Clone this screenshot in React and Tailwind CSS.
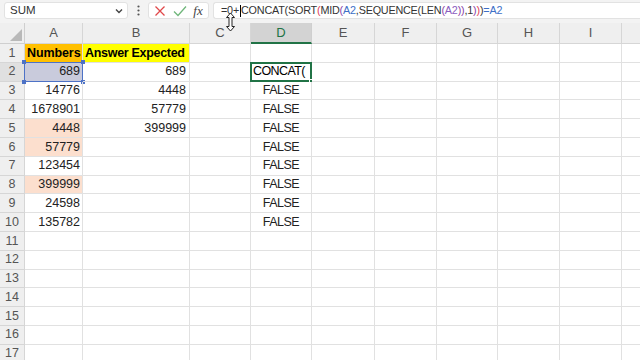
import React from "react";

const cols = [
  { k: "A", w: "w-[58px]" },
  { k: "B", w: "w-[107px]" },
  { k: "C", w: "w-[61px]" },
  { k: "D", w: "w-[61px]" },
  { k: "E", w: "w-[63px]" },
  { k: "F", w: "w-[62px]" },
  { k: "G", w: "w-[61px]" },
  { k: "H", w: "w-[62px]" },
  { k: "I", w: "w-[62px]" },
  { k: "J", w: "w-[62px]" },
];

const A = { 2: "689", 3: "14776", 4: "1678901", 5: "4448", 6: "57779", 7: "123454", 8: "399999", 9: "24598", 10: "135782" };
const B = { 2: "689", 3: "4448", 4: "57779", 5: "399999" };
const peach = { 5: true, 6: true, 8: true };

function Cell({ col, row }) {
  const base = `${col.w} shrink-0 h-full border-r border-b border-[#e1e1e1] flex items-center relative whitespace-nowrap`;
  if (col.k === "A") {
    if (row === 1)
      return <div className={`${base} bg-[#ffc000] font-bold px-[2px] text-black tracking-[-0.1px]`}>Numbers</div>;
    if (row === 2)
      return (
        <div className={`${base} bg-[#c9cbdc] justify-end pr-[2px] text-[#222]`}>
          689
          <div className="absolute inset-[-1px] border-[1.5px] border-[#4d72c6]">
            <div className="absolute left-[-3px] top-[-3px] w-[4px] h-[4px] bg-[#4d72c6]" />
            <div className="absolute right-[-3px] top-[-3px] w-[4px] h-[4px] bg-[#4d72c6]" />
            <div className="absolute left-[-3px] bottom-[-3px] w-[4px] h-[4px] bg-[#4d72c6]" />
            <div className="absolute right-[-3px] bottom-[-3px] w-[4px] h-[4px] bg-[#4d72c6]" />
          </div>
        </div>
      );
    return (
      <div className={`${base} justify-end pr-[2px] ${peach[row] ? "bg-[#fcdfce]" : ""}`}>{A[row] || ""}</div>
    );
  }
  if (col.k === "B") {
    if (row === 1)
      return <div className={`${base} bg-[#ffff00] font-bold pl-[2px] text-black tracking-[-0.3px]`}>Answer Expected</div>;
    return <div className={`${base} justify-end pr-[3px]`}>{B[row] || ""}</div>;
  }
  if (col.k === "D") {
    if (row === 2)
      return (
        <div className={`${base} pl-[2px] text-black tracking-[-0.6px]`}>
          CONCAT(
          <div className="absolute inset-[-1px] border-2 border-[#217346]">
            <div className="absolute right-[-3px] bottom-[-3px] w-[4px] h-[4px] bg-[#217346] border border-white" />
          </div>
        </div>
      );
    if (row >= 3 && row <= 10) return <div className={`${base} justify-center tracking-[-0.5px]`}>FALSE</div>;
  }
  return <div className={base} />;
}

export default function App() {
  const rows = Array.from({ length: 17 }, (_, i) => i + 1);
  return (
    <div className="w-[640px] h-[360px] overflow-hidden bg-white relative" style={{ fontFamily: '"Liberation Sans", Arial, sans-serif' }}>
      {/* Formula bar */}
      <div className="h-[23px] bg-[#f3f3f3] flex items-start pt-[2px] gap-[4px] pl-[4px] text-[#333]">
        <div className="w-[124px] h-[17px] bg-white border border-[#e2e2e2] rounded-[3px] flex items-center justify-between pl-[5px] pr-[4px] text-[11.5px]">
          <span>SUM</span>
          <svg width="8" height="6" viewBox="0 0 8 6"><path d="M1 1.5 L4 4.5 L7 1.5" stroke="#444" strokeWidth="1.4" fill="none" /></svg>
        </div>
        <div className="w-[12px] h-[17px] flex items-center justify-center">
          <svg width="3" height="11" viewBox="0 0 3 11"><circle cx="1.5" cy="1.5" r="1.1" fill="#555" /><circle cx="1.5" cy="5.5" r="1.1" fill="#555" /><circle cx="1.5" cy="9.5" r="1.1" fill="#555" /></svg>
        </div>
        <div className="w-[61px] h-[17px] bg-white border border-[#e2e2e2] rounded-[3px] flex items-center justify-around px-[2px]">
          <svg width="12" height="12" viewBox="0 0 12 12"><path d="M1.5 1.5 L10.5 10.5 M10.5 1.5 L1.5 10.5" stroke="#e0484a" strokeWidth="1.3" /></svg>
          <svg width="14" height="12" viewBox="0 0 14 12"><path d="M1 6.5 L5 10.5 L13 1.5" stroke="#6fb67a" strokeWidth="1.3" fill="none" /></svg>
          <span className="text-[13px] italic text-[#444]" style={{ fontFamily: '"Liberation Serif", serif' }}>fx</span>
        </div>
        <div className="flex-1 h-[17px] bg-white border border-[#e2e2e2] border-r-0 rounded-l-[3px] flex items-center pl-[7px] text-[10.8px] tracking-[-0.2px] text-[#333] whitespace-nowrap overflow-hidden">
          <span>=0+</span>
          <span className="inline-block w-[1px] h-[12px] bg-black mx-[0.5px]" />
          <span>CONCAT(SORT</span>
          <span className="text-[#e0405a]">(</span>
          <span>MID</span>
          <span className="text-[#8a44a8]">(</span>
          <span className="text-[#3e6fc7]">A2</span>
          <span>,SEQUENCE(LEN</span>
          <span className="text-[#8a44a8]">(</span>
          <span className="text-[#8a5cc0]">A2</span>
          <span className="text-[#8a44a8]">))</span>
          <span>,1</span>
          <span className="text-[#8a44a8]">)</span>
          <span className="text-[#e0405a]">)</span>
          <span>)</span>
          <span className="text-[#3e6fc7]">=A2</span>
        </div>
      </div>

      {/* Column headers */}
      <div className="h-[21px] flex bg-[#efefef] text-[13px] text-[#555]">
        <div className="w-[25px] shrink-0 h-full border-r border-b border-[#cfcfcf] relative">
          <svg className="absolute right-[2px] bottom-[2px]" width="12" height="12" viewBox="0 0 12 12"><path d="M12 0 L12 12 L0 12 Z" fill="#b9b9b9" /></svg>
        </div>
        {cols.map((c) =>
          c.k === "D" ? (
            <div key={c.k} className={`${c.w} shrink-0 h-full border-r border-[#cfcfcf] border-b-2 border-b-[#217346] bg-[#d3d3d3] flex items-center justify-center text-[#217346]`}>
              {c.k}
            </div>
          ) : (
            <div key={c.k} className={`${c.w} shrink-0 h-full border-r border-b border-[#d6d6d6] flex items-center justify-center`}>
              {c.k === "J" ? "" : c.k}
            </div>
          )
        )}
      </div>

      {/* Rows */}
      <div className="text-[12.5px] text-[#222]">
        {rows.map((r) => (
          <div key={r} className="h-[18.8px] flex">
            <div className={`w-[25px] shrink-0 h-full border-r border-b border-[#d6d6d6] flex items-center justify-center text-[12.5px] text-[#555] ${r === 2 ? "bg-[#e0e0e0]" : "bg-[#efefef]"}`}>
              {r}
            </div>
            {cols.map((c) => (
              <Cell key={c.k} col={c} row={r} />
            ))}
          </div>
        ))}
      </div>

      {/* Mouse cursor */}
      <svg className="absolute left-[225px] top-[12px]" width="11" height="20" viewBox="0 0 11 20">
        <path d="M5.5 1 L9.5 5.5 L7 5.5 L7 14.5 L9.5 14.5 L5.5 19 L1.5 14.5 L4 14.5 L4 5.5 L1.5 5.5 Z" fill="white" stroke="#222" strokeWidth="1" />
      </svg>
    </div>
  );
}
